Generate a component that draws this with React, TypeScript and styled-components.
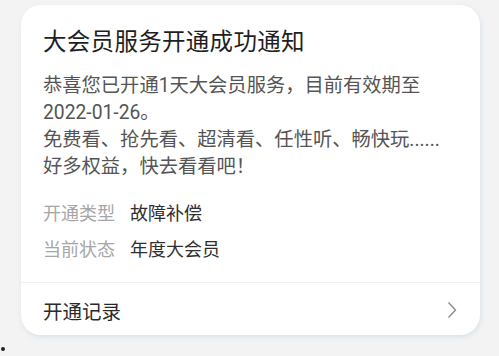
import { FC } from 'react';
import styled, { createGlobalStyle } from 'styled-components';

const GlobalStyle = createGlobalStyle`
  html, body {
    margin: 0;
    padding: 0;
    background-color: #f3f3f3;
    font-family: "Noto Sans CJK SC", "Noto Sans", sans-serif;
  }
`;

const Page = styled.div`
  width: 499px;
  height: 356px;
  padding: 5px 0 0 21px;
  box-sizing: border-box;
  display: flex;
  flex-direction: column;
`;

const Card = styled.div`
  width: 459px;
  height: 330px;
  box-sizing: border-box;
  background-color: #ffffff;
  border-radius: 20px;
  box-shadow: 1px 2px 5px rgba(170, 195, 220, 0.35);
  display: flex;
  flex-direction: column;
  overflow: hidden;
`;

const Content = styled.div`
  flex: 1;
  padding: 19px 22px 0 22px;
`;

const Title = styled.div`
  font-size: 23.5px;
  line-height: 32px;
  color: #1f1f1f;
  letter-spacing: 0.3px;
`;

const Message = styled.div`
  margin-top: 16px;
  font-size: 19.3px;
  line-height: 27px;
  color: #555555;
  font-family: Roboto, "Noto Sans CJK SC", sans-serif;
`;

const InfoList = styled.div`
  margin-top: 19px;
  display: flex;
  flex-direction: column;
  gap: 10px;
`;

const InfoRow = styled.div`
  display: flex;
  align-items: center;
  gap: 15px;
  font-size: 18px;
  line-height: 26px;
`;

const InfoLabel = styled.span`
  color: #a6a6a6;
`;

const InfoValue = styled.span`
  color: #2f2f2f;
`;

const Divider = styled.div`
  height: 1px;
  background-color: #f0f0f0;
`;

const Footer = styled.div`
  height: 52px;
  padding: 2px 22px 0 22px;
  display: flex;
  align-items: center;
  justify-content: space-between;
  font-size: 19.5px;
  color: #2a2a2a;
  box-sizing: border-box;
`;

const Chevron = styled.svg`
  width: 10px;
  height: 18px;
  margin-right: 1px;
`;

const Dot = styled.div`
  width: 4px;
  height: 4px;
  border-radius: 50%;
  background-color: #222;
  margin: 12px 0 0 -20px;
`;

const info = [
  { label: '开通类型', value: '故障补偿' },
  { label: '当前状态', value: '年度大会员' },
];

const App: FC = () => (
  <>
    <GlobalStyle />
    <Page>
      <Card>
        <Content>
          <Title>大会员服务开通成功通知</Title>
          <Message>
            恭喜您已开通1天大会员服务，目前有效期至
            <br />
            2022-01-26。
            <br />
            免费看、抢先看、超清看、任性听、畅快玩......
            <br />
            好多权益，快去看看吧！
          </Message>
          <InfoList>
            {info.map(i => (
              <InfoRow key={i.label}>
                <InfoLabel>{i.label}</InfoLabel>
                <InfoValue>{i.value}</InfoValue>
              </InfoRow>
            ))}
          </InfoList>
        </Content>
        <Divider />
        <Footer>
          <span>开通记录</span>
          <Chevron viewBox="0 0 10 18">
            <path d="M1.5 1.5 L8.5 9 L1.5 16.5" fill="none" stroke="#8a8a8a" strokeWidth="1.4" />
          </Chevron>
        </Footer>
      </Card>
      <Dot />
    </Page>
  </>
);

export default App;
